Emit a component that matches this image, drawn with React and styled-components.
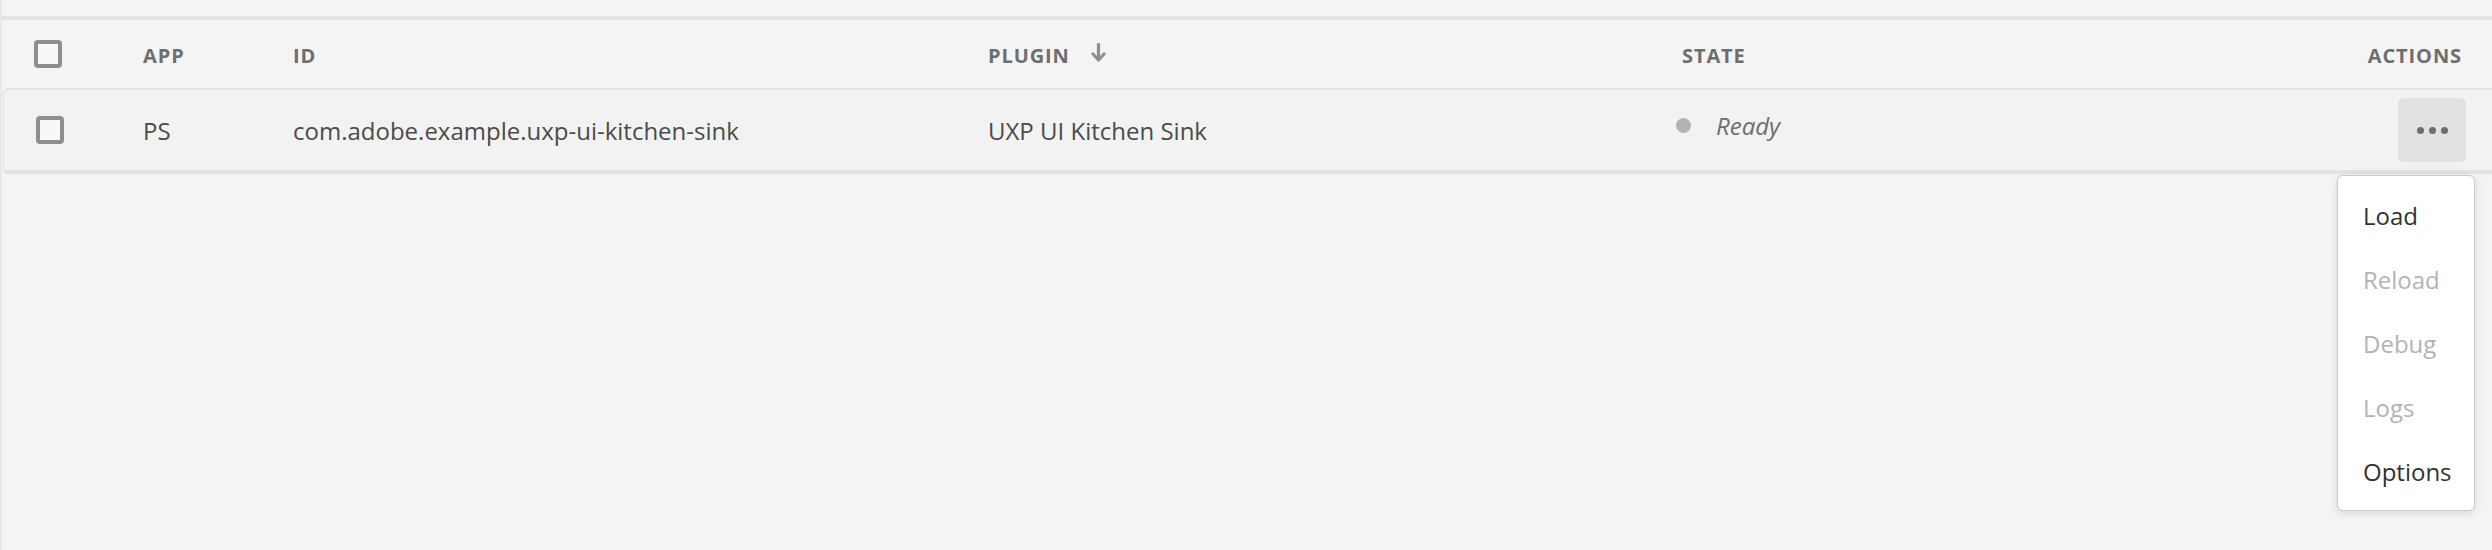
import styled, { createGlobalStyle } from "styled-components";

const GlobalStyle = createGlobalStyle`
  body {
    margin: 0;
    background: #f4f4f4;
    font-family: "Open Sans", "Liberation Sans", sans-serif;
  }
`;

const Page = styled.div`
  position: relative;
  min-height: 550px;
  box-sizing: border-box;
  padding-top: 16px;
  border-left: 2px solid #e8e8e8;
`;

const Table = styled.div`
  border-top: 4px solid #e3e3e3;
`;

const HeaderRow = styled.div`
  display: grid;
  grid-template-columns: 109px 150px 695px 694px 1fr auto;
  align-items: center;
  height: 68px;
  padding: 0 30px 0 32px;
`;

const HeadCell = styled.div`
  font-size: 20px;
  font-weight: 700;
  letter-spacing: 0.9px;
  text-transform: uppercase;
  color: #6e6e6e;
  display: flex;
  align-items: center;
  gap: 21px;
  padding-top: 2px;
`;

const SortIcon = styled.svg`
  margin-top: -5px;
`;

const DataRow = styled.div`
  display: grid;
  grid-template-columns: 107px 150px 695px 694px 1fr auto;
  align-items: center;
  height: 80px;
  margin-left: 1px;
  padding: 0 26px 0 32px;
  background: #f2f2f2;
  border: 2px solid #e3e3e3;
  border-left-width: 1px;
  border-right: none;
  border-bottom-width: 4px;
  border-radius: 5px 0 0 5px;
`;

const Cell = styled.div`
  font-size: 24px;
  color: #4b4b4b;
  white-space: nowrap;
`;

const StateCell = styled.div`
  display: flex;
  align-items: center;
  gap: 25px;
  margin-left: -6px;
  padding-bottom: 9px;
`;

const Dot = styled.span`
  width: 15px;
  height: 15px;
  border-radius: 50%;
  background: #b3b3b3;
`;

const StateText = styled.span`
  font-size: 24px;
  font-style: italic;
  color: #6e6e6e;
`;

const Checkbox = styled.span`
  display: block;
  width: 28px;
  height: 28px;
  box-sizing: border-box;
  border: 4px solid #8e8e8e;
  border-radius: 4px;
  background: #f8f8f8;
`;

const ActionCell = styled.div`
  position: relative;
`;

const MoreButton = styled.button`
  display: flex;
  align-items: center;
  justify-content: center;
  gap: 5px;
  width: 68px;
  height: 64px;
  border: none;
  border-radius: 6px;
  background: #e1e1e1;
  padding: 0;
`;

const ButtonDot = styled.span`
  width: 7px;
  height: 7px;
  border-radius: 50%;
  background: #6e6e6e;
`;

const Menu = styled.ul`
  position: absolute;
  top: calc(100% + 13px);
  right: -9px;
  width: 138px;
  box-sizing: border-box;
  margin: 0;
  padding: 7px 0;
  list-style: none;
  background: #ffffff;
  border: 1px solid #cacaca;
  border-radius: 6px;
  box-shadow: 0 2px 8px rgba(0, 0, 0, 0.12);
`;

const MenuItem = styled.li`
  display: flex;
  align-items: center;
  height: 64px;
  padding-left: 25px;
  font-size: 24px;
  color: ${(p) => (p.$disabled ? "#b3b3b3" : "#323232")};
`;

const SortArrow = () => (
  <SortIcon width="15" height="19" viewBox="0 0 15 19">
    <path d="M7.5 1.5v14" stroke="#8e8e8e" strokeWidth="3.2" strokeLinecap="round" />
    <path d="M2 11l5.5 6 5.5-6" stroke="#8e8e8e" strokeWidth="3.2" fill="none" strokeLinecap="round" strokeLinejoin="round" />
  </SortIcon>
);

const menuItems = [
  { label: "Load" },
  { label: "Reload", disabled: true },
  { label: "Debug", disabled: true },
  { label: "Logs", disabled: true },
  { label: "Options" },
];

const App = () => {
  return (
    <Page>
      <GlobalStyle />
      <Table>
        <HeaderRow>
          <Checkbox />
          <HeadCell>App</HeadCell>
          <HeadCell>ID</HeadCell>
          <HeadCell>
            Plugin
            <SortArrow />
          </HeadCell>
          <HeadCell>State</HeadCell>
          <HeadCell>Actions</HeadCell>
        </HeaderRow>

        <DataRow>
          <Checkbox />
          <Cell>PS</Cell>
          <Cell>com.adobe.example.uxp-ui-kitchen-sink</Cell>
          <Cell>UXP UI Kitchen Sink</Cell>
          <StateCell>
            <Dot />
            <StateText>Ready</StateText>
          </StateCell>
          <ActionCell>
            <MoreButton>
              <ButtonDot />
              <ButtonDot />
              <ButtonDot />
            </MoreButton>
            {/* 더보기 메뉴 */}
            <Menu>
              {menuItems.map((item) => (
                <MenuItem key={item.label} $disabled={item.disabled}>
                  {item.label}
                </MenuItem>
              ))}
            </Menu>
          </ActionCell>
        </DataRow>
      </Table>
    </Page>
  );
};

export default App;
